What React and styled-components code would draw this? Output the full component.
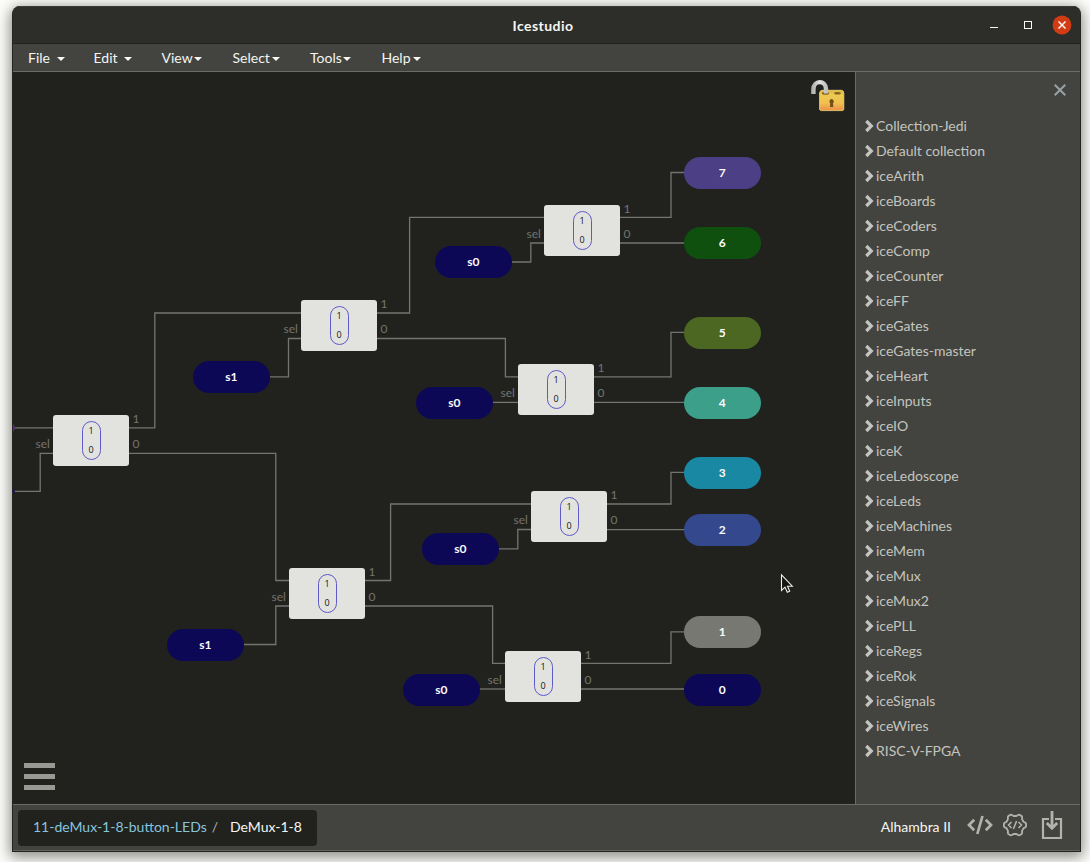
import React from "react";
import styled, { createGlobalStyle } from "styled-components";

const GlobalStyle = createGlobalStyle`
  * { box-sizing: border-box; }
  html, body { margin: 0; height: 100%; overflow: hidden; }
  body { background: #fbfbf9; font-family: Lato, "Liberation Sans", sans-serif; }
`;

const Desktop = styled.div`
  width: 1090px;
  height: 862px;
  padding: 6px 9px 10px 12px;
  overflow: hidden;
  background: #fdfdfb;
`;

const Window = styled.div`
  display: flex;
  flex-direction: column;
  width: 1069px;
  height: 846px;
  border: 1px solid #242520;
  border-top: 0;
  border-radius: 8px 8px 0 0;
  overflow: hidden;
  background: #43443f;
  box-shadow: 0 3px 14px 2px rgba(45, 48, 35, 0.55);
`;

const TitleBar = styled.header`
  flex: none;
  display: grid;
  grid-template-columns: 1fr auto 1fr;
  align-items: center;
  height: 38px;
  padding: 1px 8px 0 0;
  background: #2d2e29;
  border-top: 1px solid #3a3b37;
  border-bottom: 1px solid #20211d;
`;

const Title = styled.h1`
  grid-column: 2;
  margin: 0 0 0 1px;
  font-size: 14px;
  font-weight: 700;
  letter-spacing: 0.45px;
  color: #f6f6f2;
`;

const WindowControls = styled.div`
  display: flex;
  justify-content: flex-end;
  align-items: center;
  svg { display: block; }
`;

const MenuBar = styled.nav`
  flex: none;
  display: flex;
  height: 28px;
  padding-left: 15px;
  border-bottom: 1px solid #6a6b66;
  background: #43443f;
`;

const MenuItem = styled.div`
  display: flex;
  align-items: center;
  width: ${(p) => p.$width}px;
  font-size: 14px;
  color: #f4f5f1;
`;

const Caret = styled.span`
  width: 0;
  height: 0;
  margin: 2px 0 0 ${(p) => p.$gap}px;
  border: 4px solid transparent;
  border-top-color: #f8f8f4;
  border-bottom: 0;
`;

const Main = styled.div`
  flex: 1;
  display: flex;
  min-height: 0;
`;

const Canvas = styled.main`
  position: relative;
  width: 842px;
  overflow: hidden;
  background: #21221e;
`;

const Wires = styled.svg`
  position: absolute;
  inset: 0;
`;

const Node = styled.div`
  position: absolute;
  left: ${(p) => p.$x - 13}px;
  top: ${(p) => p.$y - 72}px;
`;

const Pill = styled(Node)`
  width: 76.6px;
  height: 32px;
  border-radius: 16px;
  background: ${(p) => p.$color};
  color: #fafafa;
  font-size: 12px;
  font-weight: 700;
  line-height: 32px;
  text-align: center;
`;

const Block = styled(Node)`
  display: flex;
  justify-content: center;
  align-items: center;
  width: 76.4px;
  height: 51px;
  border-radius: 3px;
  background: #e2e3df;
`;

const MuxSymbol = styled.div`
  display: flex;
  flex-direction: column;
  align-items: center;
  justify-content: space-between;
  width: 19px;
  height: 39px;
  padding: 3px 0 3px;
  border: 1.2px solid #5f5ac8;
  border-radius: 10px;
  color: #111;
  font-family: "Open Sans", sans-serif;
  font-size: 9px;
  line-height: 12px;
`;

const PortLabel = styled.span`
  position: absolute;
  top: ${(p) => p.$top}px;
  ${(p) => (p.$side === "left" ? "right: 79.5px;" : "left: 79.4px;")}
  color: #73746f;
  font-size: 12px;
  line-height: 14px;
`;

const LockIcon = styled.svg`
  position: absolute;
  left: 797px;
  top: 7px;
`;

const Pointer = styled.svg`
  position: absolute;
  left: 767px;
  top: 501px;
`;

const Hamburger = styled.div`
  position: absolute;
  left: 11px;
  top: 691px;
  display: flex;
  flex-direction: column;
  gap: 6px;
`;

const HamburgerBar = styled.span`
  width: 31px;
  height: 5px;
  background: #989992;
`;

const Sidebar = styled.aside`
  flex: 1;
  border-left: 1px solid #6a6b66;
  background: #43443f;
`;

const SidebarHead = styled.div`
  display: flex;
  justify-content: flex-end;
  height: 41px;
  padding: 12px 14px 0 0;
`;

const CollectionList = styled.ul`
  margin: 0;
  padding: 0 0 0 8px;
  list-style: none;
`;

const Collection = styled.li`
  display: flex;
  align-items: center;
  gap: 2px;
  height: 25px;
  color: #c3c4bf;
  font-size: 14px;
  svg { flex: none; }
`;

const Footer = styled.footer`
  flex: none;
  display: flex;
  align-items: flex-start;
  height: 47px;
  padding: 5px 17px 0 5px;
  border-top: 1px solid #6a6b66;
  border-bottom: 1px solid #60615c;
  background: #43443f;
`;

const Breadcrumb = styled.div`
  display: flex;
  align-items: center;
  width: 299px;
  height: 36px;
  padding: 0 0 3px 15px;
  border-radius: 4px;
  background: #21221e;
  font-size: 14px;
  white-space: pre;
`;

const CrumbLink = styled.a`
  color: #86c5dc;
`;

const CrumbSeparator = styled.span`
  margin: 0 12px 0 5px;
  color: #b0b1ac;
`;

const CrumbCurrent = styled.span`
  color: #f6f6f2;
`;

const BoardTools = styled.div`
  display: flex;
  align-items: center;
  height: 30px;
  margin-left: auto;
`;

const BoardName = styled.span`
  margin: 2px 16px 0 0;
  color: #f6f6f2;
  font-size: 14px;
`;

const ToolIcon = styled.svg`
  display: block;
  margin-left: ${(p) => p.$gap || 0}px;
`;

const menus = [
  ["File", 65.5, 7],
  ["Edit", 68, 6],
  ["View", 71, 1.5],
  ["Select", 77.5, 2],
  ["Tools", 71.5, 1.5],
  ["Help", 60, 2],
];

const blocks = [
  [53, 415], [301, 300], [289, 568], [544, 205], [518, 364], [531, 491], [505, 651],
];

const pills = [
  [684, 157, "#4c3f86", "7"],
  [684, 227, "#10500e", "6"],
  [684, 317, "#4b6722", "5"],
  [684, 387, "#3c9f89", "4"],
  [684, 457, "#1888a3", "3"],
  [684, 514, "#34488e", "2"],
  [684, 616, "#777872", "1"],
  [684, 674, "#0c0856", "0"],
  [435, 246, "#0c0856", "s0"],
  [193, 361, "#0c0856", "s1"],
  [416, 387, "#0c0856", "s0"],
  [422, 533, "#0c0856", "s0"],
  [167, 629, "#0c0856", "s1"],
  [403, 674, "#0c0856", "s0"],
];

const wires = [
  "M13 427.8H53",
  "M13 491.3H40.2V453.3H53",
  "M129 427.8H154.8V313H301",
  "M129 453.3H275.8V580.5H289",
  "M269 376.8H288.5V338.5H301",
  "M377 313H409.6V217.3H544",
  "M377 338.5H505.4V376.8H518",
  "M511 262H530.8V243H544",
  "M620 217.3H671V172.5H684",
  "M620 243H684",
  "M492 402.4H518",
  "M594 376.8H671V332.3H684",
  "M594 402.4H684",
  "M365 580.5H390.6V504H531",
  "M365 606H492.6V663.4H505",
  "M243 644.5H275.8V606H289",
  "M498 548.8H517.8V529.5H531",
  "M607 504H671V472.3H684",
  "M607 529.7H684",
  "M479 689H505",
  "M581 663.4H671V631.8H684",
  "M581 689H684",
];

const collections = [
  "Collection-Jedi", "Default collection", "iceArith", "iceBoards", "iceCoders",
  "iceComp", "iceCounter", "iceFF", "iceGates", "iceGates-master", "iceHeart",
  "iceInputs", "iceIO", "iceK", "iceLedoscope", "iceLeds", "iceMachines", "iceMem",
  "iceMux", "iceMux2", "icePLL", "iceRegs", "iceRok", "iceSignals", "iceWires",
  "RISC-V-FPGA",
];

function gearPath(cx, cy) {
  const pts = [];
  const steps = 96;
  for (let i = 0; i <= steps; i++) {
    const a = (i / steps) * Math.PI * 2;
    const wave = Math.max(-0.8, Math.min(0.75, Math.cos(a * 6) * 1.35));
    const r = 10.1 + wave * 1.35;
    pts.push(`${(cx + r * Math.cos(a)).toFixed(2)} ${(cy + r * Math.sin(a)).toFixed(2)}`);
  }
  return `M${pts.join("L")}Z`;
}

function MuxBlock({ x, y }) {
  return (
    <Block $x={x} $y={y}>
      <PortLabel $side="left" $top={22}>sel</PortLabel>
      <MuxSymbol>
        <span>1</span>
        <span>0</span>
      </MuxSymbol>
      <PortLabel $side="right" $top={-3}>1</PortLabel>
      <PortLabel $side="right" $top={22}>0</PortLabel>
    </Block>
  );
}

function Padlock() {
  return (
    <LockIcon width="36" height="34" viewBox="0 0 36 34">
      <defs>
        <linearGradient id="brass" x1="0" y1="0" x2="0" y2="1">
          <stop offset="0" stopColor="#d9b73c" />
          <stop offset="0.2" stopColor="#ecca50" />
          <stop offset="0.6" stopColor="#f0c250" />
          <stop offset="1" stopColor="#eb9048" />
        </linearGradient>
        <linearGradient id="steel" x1="0" y1="0" x2="1" y2="0">
          <stop offset="0" stopColor="#b4b5b4" />
          <stop offset="0.5" stopColor="#e4e5e5" />
          <stop offset="1" stopColor="#bfc0c0" />
        </linearGradient>
      </defs>
      <path d="M12 11.3H31.5Q33.6 11.3 33.8 14V30Q33.8 31.6 32 31.6H11.5Q9.6 31.6 9.6 30V14Q10 11.3 12 11.3Z" fill="url(#brass)" stroke="#f6d979" strokeWidth="0.8" />
      <ellipse cx="15.5" cy="14.3" rx="3.6" ry="1.5" fill="#846321" />
      <ellipse cx="27.5" cy="14.3" rx="3.4" ry="1.3" fill="#846321" />
      <path d="M3.4 15V10.4C3.4 0.8 16 0.8 16 9.8V14.5" fill="none" stroke="url(#steel)" strokeWidth="4.4" />
      <path d="M21.6 20A2.5 2.5 0 0 1 23 24.3L23.3 28H20L20.2 24.3A2.5 2.5 0 0 1 21.6 20Z" fill="#71501b" />
    </LockIcon>
  );
}

export default function App() {
  return (
    <Desktop>
      <GlobalStyle />
      <Window>
        <TitleBar>
          <Title>Icestudio</Title>
          <WindowControls>
            <svg width="90" height="21" viewBox="0 0 90 21" fill="none">
              <path d="M8 12.5H16" stroke="#f8f8f4" />
              <rect x="42.5" y="6.5" width="7" height="7" stroke="#f8f8f4" />
              <circle cx="80" cy="10" r="9.4" fill="#d13c15" />
              <path d="M76.5 6.5L83.5 13.5M83.5 6.5L76.5 13.5" stroke="#fff0e8" strokeWidth="1.6" />
            </svg>
          </WindowControls>
        </TitleBar>
        <MenuBar>
          {menus.map(([label, width, gap]) => (
            <MenuItem key={label} $width={width}>
              {label}
              <Caret $gap={gap} />
            </MenuItem>
          ))}
        </MenuBar>
        <Main>
          <Canvas>
            <Wires width="842" height="732" viewBox="13 72 842 732">
              {wires.map((d) => (
                <path key={d} d={d} fill="none" stroke="#747571" strokeWidth="1.3" />
              ))}
              <path d="M13 423.5L15.5 427.8L13 432Z" fill="#5b2878" />
              <path d="M13 487L15 491.3L13 496Z" fill="#15106a" />
            </Wires>
            {blocks.map(([x, y]) => (
              <MuxBlock key={`${x}-${y}`} x={x} y={y} />
            ))}
            {pills.map(([x, y, color, label]) => (
              <Pill key={`${x}-${y}`} $x={x} $y={y} $color={color}>{label}</Pill>
            ))}
            <Padlock />
            <Pointer width="14" height="22" viewBox="0 0 14 22">
              <path d="M1.5 1.8V17.5L5 14.1L7.3 19.2L9.7 18.2L7.5 13.2H12.3Z" fill="#151612" stroke="#eeeeea" strokeWidth="1.1" />
            </Pointer>
            <Hamburger>
              <HamburgerBar />
              <HamburgerBar />
              <HamburgerBar />
            </Hamburger>
          </Canvas>
          <Sidebar>
            <SidebarHead>
              <svg width="12" height="12" viewBox="0 0 12 12">
                <path d="M0.7 0.7L11.3 11.3M11.3 0.7L0.7 11.3" stroke="#98a1a5" strokeWidth="2" />
              </svg>
            </SidebarHead>
            <CollectionList>
              {collections.map((name) => (
                <Collection key={name}>
                  <svg width="10" height="14" viewBox="0 0 10 14">
                    <path d="M2.3 2L7.3 7L2.3 12" fill="none" stroke="#c3c4bf" strokeWidth="3.2" />
                  </svg>
                  {name}
                </Collection>
              ))}
            </CollectionList>
          </Sidebar>
        </Main>
        <Footer>
          <Breadcrumb>
            <CrumbLink>11-deMux-1-8-button-LEDs</CrumbLink>
            <CrumbSeparator>/</CrumbSeparator>
            <CrumbCurrent>DeMux-1-8</CrumbCurrent>
          </Breadcrumb>
          <BoardTools>
            <BoardName>Alhambra II</BoardName>
            <ToolIcon width="26" height="20" viewBox="0 0 26 20" fill="none" stroke="#b2b3ad" strokeWidth="2.7">
              <path d="M7.2 4.7L2 10L7.2 15.3M18.8 4.7L24 10L18.8 15.3M15.5 1L10.3 19" />
            </ToolIcon>
            <ToolIcon $gap={9} width="26" height="26" viewBox="0 0 26 26" fill="none" stroke="#b2b3ad">
              <path d={gearPath(13, 13)} strokeWidth="1.8" />
              <path d="M9.5 10L6.5 13L9.5 16M16.5 10L19.5 13L16.5 16M14.6 9L11.4 17" strokeWidth="1.6" />
            </ToolIcon>
            <ToolIcon $gap={13} width="22" height="28" viewBox="0 0 22 28" fill="none" stroke="#b2b3ad">
              <path d="M8 8H2V27H20V8H14" strokeWidth="2.2" />
              <path d="M11 0V17M5.8 12L11 17.2L16.2 12" strokeWidth="2.8" />
            </ToolIcon>
          </BoardTools>
        </Footer>
      </Window>
    </Desktop>
  );
}
